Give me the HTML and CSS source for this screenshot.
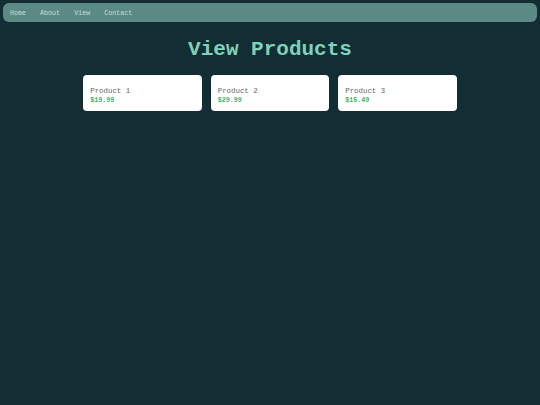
FILE: index.html
```html
<!DOCTYPE html>
<html>
<head>
<meta charset="utf-8">
<link rel="stylesheet" href="styles.css">
</head>
<body>
<nav class="nav">
  <a class="nav-link" href="#">Home</a>
  <a class="nav-link" href="#">About</a>
  <a class="nav-link" href="#">View</a>
  <a class="nav-link" href="#">Contact</a>
</nav>
<h1 class="title">View Products</h1>
<div class="cards">
  <div class="card"><div class="name">Product 1</div><div class="price">$19.99</div></div>
  <div class="card"><div class="name">Product 2</div><div class="price">$29.99</div></div>
  <div class="card"><div class="name">Product 3</div><div class="price">$15.49</div></div>
</div>
</body>
</html>
```
FILE: styles.css
```css
html, body { margin: 0; padding: 0; }
body {
  background: #132d35;
  font-family: "Liberation Mono", "Courier New", monospace;
  width: 540px;
  height: 405px;
  overflow: hidden;
}
.nav {
  margin: 3px 3px 0 3px;
  height: 19px;
  background: #5b8a85;
  border-radius: 6px;
  display: flex;
  align-items: center;
  padding-left: 7px;
  gap: 14px;
  box-sizing: border-box;
}
.nav-link {
  color: #c4dcd6;
  font-size: 6.7px;
  text-decoration: none;
}
.title {
  margin: 16px 0 0 0;
  text-align: center;
  font-size: 21px;
  font-weight: bold;
  color: #7fd1b9;
  line-height: 24px;
}
.cards {
  display: flex;
  justify-content: center;
  gap: 9px;
  margin-top: 13px;
}
.card {
  width: 118.5px;
  height: 36px;
  box-sizing: border-box;
  background: #ffffff;
  border-radius: 4px;
  padding: 11px 7px 0 7px;
}
.name {
  font-size: 7.4px;
  color: #666666;
  line-height: 10px;
}
.price {
  font-size: 6.7px;
  font-weight: bold;
  color: #3cb461;
  line-height: 9px;
}
```
